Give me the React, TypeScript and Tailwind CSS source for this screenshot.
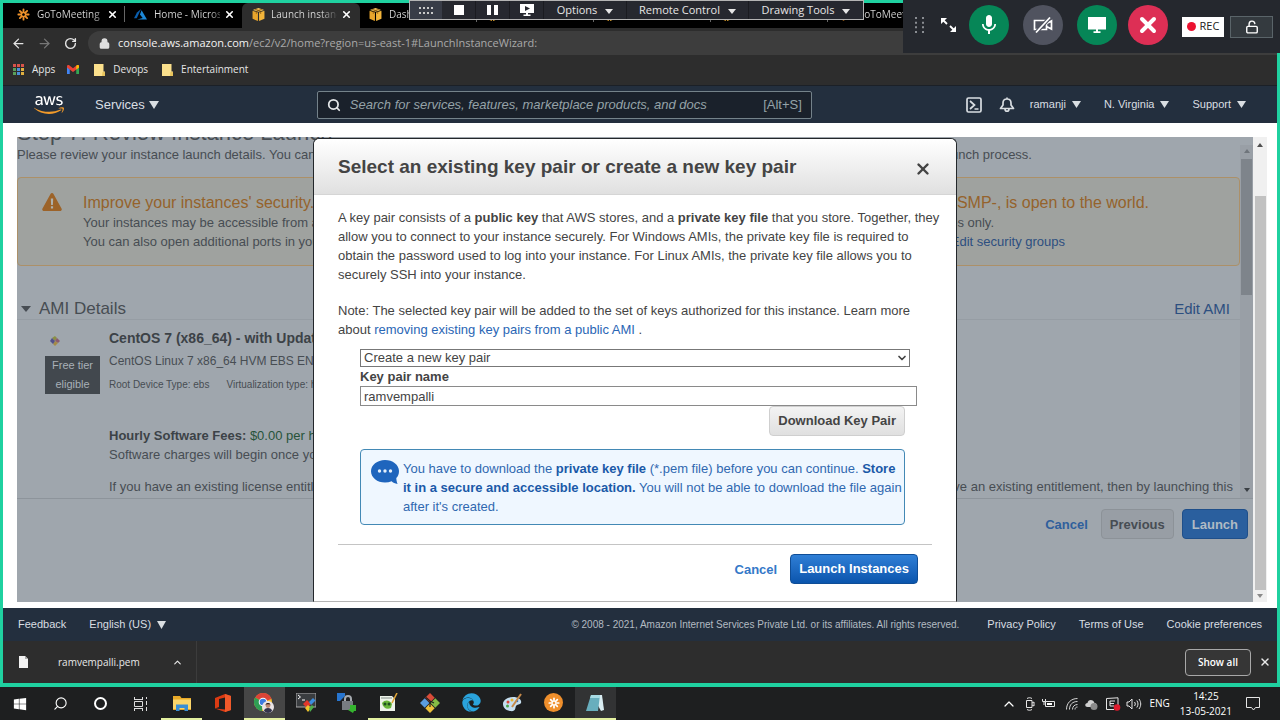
import type { ReactNode } from "react";
import { ArrowLeft, ArrowRight, ChevronDown, ChevronUp, Lock, RotateCw, Search, Unlock, X } from "lucide-react";
import { FaAws, FaEdge, FaWindows } from "react-icons/fa";
import { MdMic } from "react-icons/md";

function Triangle({ className }: { className: string }) {
  return (
    <svg viewBox="0 0 10 8" preserveAspectRatio="none" className={className} fill="currentColor" aria-hidden="true">
      <path d="M0 0h10L5 8z" />
    </svg>
  );
}

function GoToFlower({ className }: { className: string }) {
  return (
    <svg viewBox="0 0 24 24" className={className} stroke="currentColor" strokeWidth="3.4" strokeLinecap="round" aria-hidden="true">
      <path d="M12 8V2.500M12 16v5.500M8 12H2.500M16 12h5.500M9.200 9.200 5.300 5.300M14.800 14.800l3.900 3.900M14.800 9.200l3.900-3.900M9.200 14.800l-3.900 3.900" />
    </svg>
  );
}

function AzureMark() {
  return (
    <svg viewBox="0 0 24 20" className="h-[11px] w-[13px] shrink-0" aria-hidden="true">
      <path d="M13 0 5.500 6.500 0 17h5z" fill="#0a5fae" />
      <path d="m14 2-3 8 5 6.500L6 19h18z" fill="#1c87d6" />
    </svg>
  );
}

function AwsCube() {
  return (
    <svg viewBox="0 0 24 24" className="h-[13px] w-[13px] shrink-0" aria-hidden="true">
      <path d="M1 5 11 8.500V24L1 20z" fill="#e8a52c" />
      <path d="M23 5 13 8.500V24l10-4z" fill="#f3b53a" />
      <path d="M12 0 1.500 3.500 12 7l10.500-3.500z" fill="#f7c65c" />
      <path d="M5.500 2.200 16 5.800v5M18.500 2.200 8 5.800v5" fill="none" stroke="#7a4c0a" strokeWidth="1.300" />
    </svg>
  );
}

function Tab({ icon, title, active = false, divider = false }: { icon: ReactNode; title?: string; active?: boolean; divider?: boolean }) {
  return (
    <div className={active ? "flex h-full w-[118px] shrink-0 items-center rounded-t-md bg-[#2d2d2d] pb-[3px] pl-[10px]" : "relative flex h-full w-[117px] shrink-0 items-center pb-[3px] pl-[9px]"}>
      {divider && <span className="absolute right-0 top-[3px] h-4 w-px bg-[#666]" />}
      {icon}
      {title && (
        <>
          <span className={active ? "ml-[6px] w-[66px] overflow-hidden whitespace-nowrap bg-linear-to-r from-[#dcdcdc] from-75% to-[#444] bg-clip-text text-transparent" : "ml-[7px] w-[66px] overflow-hidden whitespace-nowrap bg-linear-to-r from-[#dcdcdc] from-85% to-[#555] bg-clip-text text-transparent"}>{title}</span>
          <button aria-label={"Close " + title} className="ml-1 text-white">
            <X className="h-[11px] w-[11px]" strokeWidth={3.5} />
          </button>
        </>
      )}
    </div>
  );
}

function TabStrip() {
  return (
    <div className="flex h-[25px] overflow-hidden bg-black pl-[5px] text-[10px]">
      <Tab icon={<GoToFlower className="h-[13px] w-[13px] shrink-0 text-[#f0932b]" />} title="GoToMeeting" divider />
      <Tab icon={<AzureMark />} title="Home - Microsoft" />
      <Tab icon={<AwsCube />} title="Launch instance" active />
      <Tab icon={<AwsCube />} title="Dashboard" divider />
      <Tab icon={<AwsCube />} divider />
      <Tab icon={<AwsCube />} divider />
      <Tab icon={<AwsCube />} divider />
      <Tab icon={<GoToFlower className="h-[13px] w-[13px] shrink-0 text-[#f0932b]" />} title="GoToMeeting" />
    </div>
  );
}

function AddressBar() {
  return (
    <div className="flex h-[30px] items-center bg-[#2d2d2d] pl-2">
      <button aria-label="Back" className="text-[#e4e4e4]"><ArrowLeft className="h-[15px] w-[15px]" /></button>
      <button aria-label="Forward" className="ml-[11px] text-[#777]"><ArrowRight className="h-[15px] w-[15px]" /></button>
      <button aria-label="Reload" className="ml-3 text-[#e4e4e4]"><RotateCw className="h-[13px] w-[13px]" strokeWidth={2.6} /></button>
      <div className="ml-[11px] flex h-6 flex-1 items-center rounded-l-full bg-[#3d3d3d] pl-[11px]">
        <Lock className="h-[11px] w-[11px] text-[#dedede]" fill="currentColor" strokeWidth={3} />
        <span className="ml-2 text-[11px] text-[#a9a9a9]"><span className="text-[#f3f3f3]">console.aws.amazon.com</span>/ec2/v2/home?region=us-east-1#LaunchInstanceWizard:</span>
      </div>
    </div>
  );
}

const appDots = ["#d9534a", "#d9534a", "#d9534a", "#5aa05a", "#4a8fd9", "#e0b040", "#5aa05a", "#4a8fd9", "#e0b040"];

function Folder() {
  return (
    <svg viewBox="0 0 11 12" className="h-3 w-[11px]" aria-hidden="true">
      <path d="M0 0h9.500v7.500H11V12H0z" fill="#fbe08c" />
      <path d="M8.500 8H11v4H8z" fill="#e7c35c" />
    </svg>
  );
}

function Bookmarks() {
  return (
    <nav aria-label="Bookmarks" className="flex h-[27px] items-center bg-[#2d2d2d] pb-1 pl-[10px] text-[10px] text-[#e6e6e6]">
      <a href="#apps" className="flex items-center gap-2">
        <svg viewBox="0 0 11 11" className="h-[11px] w-[11px]" aria-hidden="true">
          {appDots.map((c, i) => (
            <rect key={i} x={(i % 3) * 4} y={Math.floor(i / 3) * 4} width="3" height="3" fill={c} />
          ))}
        </svg>
        Apps
      </a>
      <a href="#mail" aria-label="Gmail" className="ml-3">
        <svg viewBox="0 0 24 18" className="h-[9px] w-3" aria-hidden="true">
          <path d="M0 3v15h5.500V8z" fill="#4285f4" />
          <path d="M24 3v15h-5.500V8z" fill="#34a853" />
          <path d="M0 3c0-3 3-3.500 5-2l7 5.500L19 1c2-1.500 5-1 5 2v2l-12 9L0 5z" fill="#ea4335" />
          <path d="m18.500 1.500 2-1.300C23 0 24 1 24 3v2l-5.500 4z" fill="#fbbc04" />
        </svg>
      </a>
      <a href="#devops" className="ml-[15px] flex items-center gap-2"><Folder />Devops</a>
      <a href="#entertainment" className="ml-[14px] flex items-center gap-2"><Folder />Entertainment</a>
    </nav>
  );
}

function AwsNav() {
  return (
    <header className="flex h-[38px] items-center border-t border-[#1b2027] bg-[#232f3e] pl-[31px] pr-[31px] text-[11px] text-[#d9dee2]">
      <a href="#home" aria-label="AWS" className="relative h-6 w-[30px]">
        <FaAws className="absolute inset-0 h-6 w-[30px] text-white [clip-path:inset(0_0_42%_0)]" />
        <FaAws className="absolute inset-0 h-6 w-[30px] text-[#f19a2a] [clip-path:inset(58%_0_0_0)]" />
      </a>
      <button className="ml-[31px] flex items-center gap-1 text-[13px]">Services<Triangle className="h-2 w-[10px]" /></button>
      <label className="ml-[158px] flex h-7 w-[495px] items-center rounded-xs border border-[#74828a] bg-[#1a212b] px-[9px]">
        <Search className="h-[14px] w-[14px] text-[#e3e6e8]" strokeWidth={3} />
        <input aria-label="Search" placeholder="Search for services, features, marketplace products, and docs" className="ml-[9px] min-w-0 flex-1 bg-transparent text-[13px] italic outline-none placeholder:text-[#95a3a8]" />
        <span className="text-[13px] text-[#95a3a8]">[Alt+S]</span>
      </label>
      <div className="ml-auto flex items-center">
        <button aria-label="CloudShell">
          <svg viewBox="0 0 16 16" className="h-4 w-4" fill="none" stroke="currentColor" strokeWidth="1.700" aria-hidden="true"><rect x="1" y="1" width="14" height="14" rx="1.500" /><path d="m4 4 4.500 4L4 12M8.500 12H12.500" /></svg>
        </button>
        <button aria-label="Notifications" className="ml-[17px]">
          <svg viewBox="0 0 16 16" className="h-4 w-4" fill="none" stroke="currentColor" strokeWidth="1.700" strokeLinejoin="round" aria-hidden="true"><path d="M1.500 11.500 4 8V6c0-2.200 1.500-4 4-4s4 1.800 4 4v2l2.500 3.500zM8 .5V2M6 12c0 3 4 3 4 0" /></svg>
        </button>
        <button className="ml-[15px] flex items-center gap-[6px]">ramanji<Triangle className="h-[7px] w-[9px]" /></button>
        <button className="ml-[23px] flex items-center gap-[6px]">N. Virginia<Triangle className="h-[7px] w-[9px]" /></button>
        <button className="ml-[23px] flex items-center gap-[6px]">Support<Triangle className="h-[7px] w-[9px]" /></button>
      </div>
    </header>
  );
}

function ReviewPage() {
  return (
    <main className="flex h-full flex-1 flex-col overflow-hidden bg-[#9fa6ad] text-[13px] leading-[19px] text-[#474d53]">
      <div className="flex h-2 items-end overflow-hidden pb-[2px]">
        <h1 className="whitespace-nowrap text-[22px] leading-[20px]">Step 7: Review Instance Launch</h1>
      </div>
      <div className="flex h-[354px] border-b border-[#8d949b]">
        <div className="min-w-0 flex-1">
          <p className="flex w-[1015px] justify-between whitespace-nowrap"><span>Please review your instance launch details. You can go back</span><span>complete the launch process.</span></p>
          <section className="mt-[13px] flex h-[89px] rounded-sm border border-[#ac9068] bg-[#9fa29f] pl-6 pt-[15px]">
            <svg viewBox="0 0 20 18" className="h-[18px] w-5" aria-hidden="true">
              <path d="M10 0c.7 0 1.200.3 1.500.9l8 14.600c.7 1.200 0 2.500-1.500 2.500H2C.5 18-.2 16.700.5 15.500l8-14.600C8.800.3 9.300 0 10 0z" fill="#9c6329" />
              <path d="M8.800 5.500h2.400L10.900 12H9.100zM8.900 13.200h2.200v2.200H8.900z" fill="#aeb1ae" />
            </svg>
            <div className="ml-[21px] w-[1066px] whitespace-nowrap">
              <h2 className="flex justify-between text-[16px] leading-[20px] text-[#95632c]"><span>Improve your instances' security. Your group,</span><span>SMP-, is open to the world.</span></h2>
              <p className="flex w-[911px] justify-between"><span>Your instances may be accessible from any IP</span><span>addresses only.</span></p>
              <p className="flex w-[982px] justify-between"><span>You can also open additional ports in your security</span><a href="#groups" className="text-[#2d4f80]">Edit security groups</a></p>
            </div>
          </section>
          <div className="mt-8 flex h-[22px] items-center border-b border-[#969da4] pl-1 pr-[10px]">
            <Triangle className="h-[6px] w-[10px]" />
            <h2 className="ml-2 text-[17px]">AMI Details</h2>
            <a href="#ami" className="ml-auto text-[15px] text-[#2d4f80]">Edit AMI</a>
          </div>
          <div className="flex pl-7">
            <div className="w-[55px] shrink-0 pt-4">
              <svg viewBox="0 0 10 10" className="ml-[5px] h-[10px] w-[10px]" aria-hidden="true">
                <path d="m5 0 2 2-2 3-3-3z" fill="#8b8f45" />
                <path d="m10 5-2 2-3-2 2-3z" fill="#8a5a6e" />
                <path d="m5 10-2-2 2-3 3 2z" fill="#a58a45" />
                <path d="m0 5 2-3 3 3-2 3z" fill="#51508a" />
              </svg>
              <p className="mt-[10px] bg-[#42484e] text-center text-[11px] text-[#a9b0b7]">Free tier<br />eligible</p>
            </div>
            <div className="ml-[9px] min-w-0 flex-1 whitespace-nowrap pt-[9px]">
              <h3 className="text-[14px] font-bold text-[#3c4247]">CentOS 7 (x86_64) - with Updates</h3>
              <p className="mt-1 text-[12px]">CentOS Linux 7 x86_64 HVM EBS ENA 2002_01</p>
              <p className="mt-1 flex gap-[17px] text-[10px]"><span>Root Device Type: ebs</span><span>Virtualization type: hvm</span></p>
              <p className="mt-8"><b className="text-[#3c4247]">Hourly Software Fees:</b> <span className="text-[#27533a]">$0.00 per hour</span></p>
              <p>Software charges will begin once you launch</p>
              <p className="mt-[13px] flex justify-between pr-[7px]"><span>If you have an existing license entitlement</span><span>have an existing entitlement, then by launching this</span></p>
            </div>
          </div>
        </div>
        <div className="flex w-[13px] flex-col items-center bg-[#999fa6]">
          <Triangle className="mt-1 h-1 w-[6px] rotate-180 text-[#6f757b]" />
          <div className="mt-[6px] h-[136px] w-[11px] bg-[#7e848b]" />
          <Triangle className="mb-[6px] mt-auto h-1 w-[6px] text-[#3a3f44]" />
        </div>
      </div>
      <div className="flex items-center justify-end pr-[5px] pt-[10px] font-bold">
        <button className="text-[#2f5f9c]">Cancel</button>
        <button className="ml-[13px] h-[30px] rounded-sm border border-[#8c9298] bg-[#989ea5] px-2">Previous</button>
        <button className="ml-2 h-[30px] rounded-sm border border-[#1f4f8a] bg-[#2a5f9e] px-[9px] text-[#b0bac4]">Launch</button>
      </div>
    </main>
  );
}

function KeyPairDialog() {
  return (
    <div role="dialog" aria-labelledby="dialog-title" className="absolute left-1/2 top-px w-[644px] -translate-x-1/2 rounded-t-md border border-[#23272b] border-b-[#b5b5b5] bg-white text-[13px] leading-[19px] text-[#444]">
      <div className="flex h-14 items-center justify-between rounded-t-md border-b border-[#d5d5d5] bg-linear-to-b from-white to-[#e0e0e0] pl-6 pr-6">
        <h2 id="dialog-title" className="text-[19px] font-bold">Select an existing key pair or create a new key pair</h2>
        <button aria-label="Close dialog"><X className="mt-1 h-[18px] w-[18px]" strokeWidth={3.2} /></button>
      </div>
      <div className="px-6 pt-[13px]">
        <p className="whitespace-nowrap">
          A key pair consists of a <b>public key</b> that AWS stores, and a <b>private key file</b> that you store. Together, they<br />
          allow you to connect to your instance securely. For Windows AMIs, the private key file is required to<br />
          obtain the password used to log into your instance. For Linux AMIs, the private key file allows you to<br />
          securely SSH into your instance.
        </p>
        <p className="mt-[17px] whitespace-nowrap">
          Note: The selected key pair will be added to the set of keys authorized for this instance. Learn more<br />
          about <a href="#remove" className="text-[#2a66b5]">removing existing key pairs from a public AMI</a> .
        </p>
        <div className="pl-[22px] pr-[15px]">
          <div className="relative mr-[7px] mt-[10px]">
            <select aria-label="Key pair option" className="block h-[18px] w-full appearance-none border border-[#777] bg-white pl-[3px] leading-4">
              <option>Create a new key pair</option>
            </select>
            <ChevronDown className="pointer-events-none absolute right-[2px] top-[3px] h-3 w-3" strokeWidth={3.4} />
          </div>
          <label htmlFor="pair-name" className="block font-bold">Key pair name</label>
          <input id="pair-name" defaultValue="ramvempalli" className="block h-5 w-full border border-[#8a8a8a] bg-white px-[3px]" />
          <div className="mr-3">
            <div className="flex justify-end">
              <button className="h-[30px] rounded-sm border border-[#cfcfcf] bg-linear-to-b from-[#f3f3f3] to-[#e0e0e0] px-2 pb-[1px] font-bold">Download Key Pair</button>
            </div>
            <div className="mt-[13px] flex h-[76px] rounded-sm border border-[#4389b5] bg-[#eff7ff] pl-[10px] pt-[9px] text-[#3068b0]">
              <svg viewBox="0 0 28 26" className="h-[26px] w-7 shrink-0" aria-hidden="true">
                <path d="M14 1c7.700 0 14 4.800 14 11 0 3.300-1 5.200-2.700 7.100.1 2.300.6 4.400 1.300 5.900-2.600-.4-4.700-1.300-6-2.700-2 .8-4.200 1.200-6.600 1.200C6.300 23.500 0 18.500 0 12.200 0 6 6.300 1 14 1z" fill="#1f65bd" />
                <g fill="#e6f0fb"><circle cx="8.500" cy="12" r="1.700" /><circle cx="14" cy="12" r="1.700" /><circle cx="19.500" cy="12" r="1.700" /></g>
              </svg>
              <p className="ml-1 whitespace-nowrap">
                You have to download the <b className="text-[#1a59a8]">private key file</b> (*.pem file) before you can continue. <b className="text-[#1a59a8]">Store<br />
                it in a secure and accessible location.</b> You will not be able to download the file again<br />
                after it's created.
              </p>
            </div>
          </div>
        </div>
        <div className="mt-[19px] flex items-center justify-end border-t border-[#c4c4c4] pb-[17px] pr-[14px] pt-[9px] font-bold">
          <button className="text-[#3478c8]">Cancel</button>
          <button className="ml-[13px] h-[30px] rounded-sm border border-[#0f4d96] bg-linear-to-b from-[#2f7fd6] to-[#0a55ad] px-2 pb-[1px] text-white">Launch Instances</button>
        </div>
      </div>
    </div>
  );
}

function AwsFooter() {
  return (
    <footer className="flex h-[33px] items-center bg-[#232f3e] pl-[15px] pr-[15px] text-[11px] text-[#d9dee2]">
      <a href="#feedback">Feedback</a>
      <button className="ml-[23px] flex items-center gap-[6px]">English (US)<Triangle className="h-2 w-[9px]" /></button>
      <span className="ml-auto text-[10px] text-[#b3bbc2]">© 2008 - 2021, Amazon Internet Services Private Ltd. or its affiliates. All rights reserved.</span>
      <a href="#privacy" className="ml-7">Privacy Policy</a>
      <a href="#terms" className="ml-[23px]">Terms of Use</a>
      <a href="#cookies" className="ml-[23px]">Cookie preferences</a>
    </footer>
  );
}

function DownloadShelf() {
  return (
    <div className="flex h-[42px] items-center bg-[#2d2d2d] pl-4 pr-[6px] text-[10px] text-[#e8e8e8]">
      <svg viewBox="0 0 9 12" className="h-3 w-[9px]" aria-hidden="true"><path d="M0 0h6l3 3v9H0z" fill="#f2f2f2" /><path d="M6 0v3h3" fill="#aaa" /></svg>
      <a href="#file" className="ml-[30px]">ramvempalli.pem</a>
      <button aria-label="File options" className="ml-8"><ChevronUp className="h-[11px] w-[11px]" strokeWidth={2.5} /></button>
      <span className="ml-[13px] h-full w-px bg-[#3c3c3c]" />
      <button className="ml-auto h-[27px] rounded border border-[#a8a8a8] bg-[#363636] px-3 font-semibold text-white">Show all</button>
      <button aria-label="Close downloads" className="ml-2"><X className="h-3 w-3" strokeWidth={2.8} /></button>
    </div>
  );
}

function MeetingBar() {
  return (
    <div className="absolute left-[409px] top-0 flex h-5 w-[455px] items-stretch border border-[#b4b4b4] bg-[#26282f] text-[11px] text-[#e6e6e6]">
      <div className="flex w-8 items-center justify-center bg-[#383c47]">
        <svg viewBox="0 0 14 7" className="h-[7px] w-[14px]" fill="#c9c9c9" aria-hidden="true">
          <path d="M0 0h2v2H0zM4 0h2v2H4zM8 0h2v2H8zM12 0h2v2h-2zM0 5h2v2H0zM4 5h2v2H4zM8 5h2v2H8zM12 5h2v2h-2z" />
        </svg>
      </div>
      <button aria-label="Stop" className="flex w-[34px] items-center justify-center border-r border-[#1a1b20]"><span className="h-[10px] w-[10px] bg-white" /></button>
      <button aria-label="Pause" className="flex w-[34px] items-center justify-center gap-[3px] border-r border-[#1a1b20]"><span className="h-[10px] w-1 bg-white" /><span className="h-[10px] w-1 bg-white" /></button>
      <button aria-label="Show screen" className="flex w-[34px] items-center justify-center border-r border-[#1a1b20]">
        <svg viewBox="0 0 14 12" className="h-3 w-[14px]" aria-hidden="true"><path d="M0 0h14v9H0zM6 9h2v1.500H6zM3.500 10.500h7V12h-7z" fill="#fff" /><path d="M5 2v5l5-2.500z" fill="#26282f" /></svg>
      </button>
      <button className="flex w-[83px] items-center justify-center gap-2 border-r border-[#1a1b20]">Options<Triangle className="mt-[2px] h-[5px] w-2" /></button>
      <button className="flex w-[122px] items-center justify-center gap-2 border-r border-[#1a1b20]">Remote Control<Triangle className="mt-[2px] h-[5px] w-2" /></button>
      <button className="flex flex-1 items-center justify-center gap-2">Drawing Tools<Triangle className="mt-[2px] h-[5px] w-2" /></button>
    </div>
  );
}

function CallPanel() {
  return (
    <div className="absolute right-0 top-0 flex h-[53px] w-[377px] items-center bg-[#25282e] pb-[3px] pl-3 text-white">
      <svg viewBox="0 0 9 16" className="h-4 w-[9px]" fill="#8a8d92" aria-hidden="true">
        <path d="M0 0h2v2H0zM7 0h2v2H7zM0 4.700h2v2H0zM7 4.700h2v2H7zM0 9.300h2v2H0zM7 9.300h2v2H7zM0 14h2v2H0zM7 14h2v2H7z" />
      </svg>
      <button aria-label="Resize" className="ml-4">
        <svg viewBox="0 0 17 16" className="h-4 w-[17px]" aria-hidden="true"><path d="M1 1h6L1 7zM16 15h-6l6-6z" fill="#fff" /><path d="m3 3 4 4M10 9l4 4" stroke="#fff" strokeWidth="1.800" /></svg>
      </button>
      <button aria-label="Mute" className="ml-3 flex h-10 w-10 items-center justify-center rounded-full bg-[#068657]"><MdMic className="h-6 w-6" /></button>
      <button aria-label="Camera" className="ml-[14px] flex h-10 w-10 items-center justify-center rounded-full bg-[#50535f]">
        <svg viewBox="0 0 20 16" className="h-4 w-5" fill="none" stroke="#fff" strokeWidth="1.700" aria-hidden="true"><path d="M1.500 3.500h12v9h-12zM13.500 6.500l5-2.500v8l-5-2.500" /><path d="M17 .5 3 15.500" stroke="#50535f" strokeWidth="4" /><path d="M17 .5 3 15.500" /></svg>
      </button>
      <button aria-label="Share screen" className="ml-[14px] flex h-10 w-10 items-center justify-center rounded-full bg-[#068657]">
        <svg viewBox="0 0 18 16" className="h-4 w-[18px]" fill="#fff" aria-hidden="true"><path d="M0 0h18v12.500H0zM8 12h2v2.500H8zM5.500 14.300h7V16h-7z" /></svg>
      </button>
      <button aria-label="Leave" className="ml-[11px] flex h-10 w-10 items-center justify-center rounded-full bg-[#dd2f55]"><X className="h-6 w-6" strokeWidth={4} /></button>
      <button className="ml-[14px] mt-[3px] flex h-5 w-[42px] items-center justify-center gap-1 bg-white text-[11px] text-[#222]"><span className="h-[9px] w-[9px] rounded-full bg-[#ec1230]" />REC</button>
      <button aria-label="Unlock meeting" className="ml-[6px] mt-[3px] flex h-[22px] w-[43px] items-center justify-center border border-[#5a6469] bg-[#343a3f]"><Unlock className="h-[14px] w-[14px]" strokeWidth={2.4} /></button>
    </div>
  );
}

const TILE = "flex h-full flex-1 items-center justify-center border-b-2 border-transparent";
const TILE_OPEN = "flex h-full flex-1 items-center justify-center border-b-2 border-[#e3f0a0]";
const TILE_ACTIVE = "flex h-full flex-1 items-center justify-center border-b-2 border-[#e3f0a0] bg-[#464646]";

function Taskbar() {
  return (
    <div className="flex h-[33px] items-center bg-[#1e1f20] text-[10px] text-white">
      <button aria-label="Start" className="flex w-10 justify-center"><FaWindows className="h-[14px] w-[14px]" /></button>
      <button aria-label="Search" className="flex w-10 justify-center"><Search className="h-[15px] w-[15px] -scale-x-100" strokeWidth={1.8} /></button>
      <button aria-label="Cortana" className="flex w-10 justify-center"><span className="h-[13px] w-[13px] rounded-full border-2 border-white" /></button>
      <button aria-label="Task view" className="flex w-[41px] justify-center">
        <svg viewBox="0 0 15 14" className="h-[14px] w-[15px]" fill="none" stroke="#ddd" aria-hidden="true"><path d="M1.500 0v3M9.500 0v3M1.500 2.500h8M1.500 14v-3M9.500 14v-3M1.500 11.500h8M1.500 4.500h8v5h-8zM13.500 0v2M13.500 4v4M13.500 10v4" /></svg>
      </button>
      <div className="flex h-full w-[455px]">
        <button aria-label="File Explorer" className={TILE_OPEN}>
          <svg viewBox="0 0 18 16" className="h-4 w-[18px]" aria-hidden="true"><path d="M0 1h7l1.500 2H18v12H0z" fill="#e9a927" /><path d="M0 4.500h18V14H0z" fill="#fbd66b" /><path d="M3 16V9.500h12V16h-3.500v-3h-5v3z" fill="#3a8fd6" /></svg>
        </button>
        <button aria-label="Office" className={TILE}>
          <svg viewBox="0 0 16 18" className="h-[18px] w-4" aria-hidden="true"><path d="M0 4 10 0l6 2v14l-6 2-10-3.500 10 1V3.500L4 5v8l-4 1.500z" fill="#dc3b13" /><path d="m10 0 6 2v14l-6 2z" fill="#f0592a" /></svg>
        </button>
        <button aria-label="Chrome" className={TILE_ACTIVE}>
          <svg viewBox="0 0 22 20" className="h-5 w-[22px]" aria-hidden="true">
            <circle cx="10" cy="9" r="9" fill="#f4c430" />
            <path d="M10 9 2.200 4.500A9 9 0 0 1 18.500 6z" fill="#dc4437" />
            <path d="M10 9 2.200 4.500A9 9 0 0 0 9 18z" fill="#2f9e54" />
            <circle cx="10" cy="9" r="4.300" fill="#fff" /><circle cx="10" cy="9" r="3.300" fill="#3d7ce0" />
            <circle cx="15" cy="14" r="6" fill="#e9e4e6" /><circle cx="15" cy="12.500" r="2.400" fill="#c08a70" /><path d="M12.300 12a2.800 2.800 0 0 1 5.400 0l-1-.8h-3z" fill="#1c1517" /><path d="M11 18c0-4 8-4 8 0-2 2.500-6 2.500-8 0z" fill="#33344a" />
          </svg>
        </button>
        <button aria-label="MobaXterm" className={TILE}>
          <svg viewBox="0 0 20 20" className="h-5 w-5" aria-hidden="true"><path d="M0 0h20v14H0z" fill="#3a3d40" stroke="#aaa" /><path d="m2 2 2.500 2L2 6M6 7h3" stroke="#fff" fill="none" /><path d="m7 11 4-4 4 4-4 4z" fill="#e0362c" /><path d="m13 9 4-4 2.500 2.500L15 12z" fill="#3c8ddf" /><path d="m9 15 3-3 3 3-3 4z" fill="#f0c22c" /><path d="m13 15 3-3 2 2-4 5z" fill="#4eb04b" /></svg>
        </button>
        <button aria-label="WinSCP" className={TILE}>
          <svg viewBox="0 0 20 20" className="h-5 w-5" aria-hidden="true"><path d="M0 0h8v3L3 8H0z" fill="#2775cf" /><path d="M8 8V6c0-4 6-4 6 0v2" stroke="#a5aaaf" strokeWidth="2" fill="none" /><path d="M5 8h11v9H5z" fill="#777c81" /><path d="M13 12h6v6h-2l-1 2-5-3 2-1z" fill="#35b52f" /></svg>
        </button>
        <button aria-label="Notepad++" className={TILE_OPEN}>
          <svg viewBox="0 0 19 19" className="h-[19px] w-[19px]" aria-hidden="true"><path d="M1 3h12l3 3v12H1z" fill="#eef3ea" /><path d="M2 4h11v2H2z" fill="#b8bfb8" /><path d="M3 10c3-4 8-3 10 1l-1 4c-4 2-8 0-9-5z" fill="#68b53a" /><circle cx="6" cy="11" r="1.500" fill="#205020" /><circle cx="10" cy="11" r="1.500" fill="#205020" /><path d="m18 0-5 10" stroke="#e0a436" strokeWidth="1.600" /></svg>
        </button>
        <button aria-label="Git" className={TILE_OPEN}>
          <svg viewBox="0 0 20 20" className="h-5 w-5" aria-hidden="true"><path d="m10 0 4.700 4.700L10 9.400 5.300 4.700z" fill="#d94c38" /><path d="m4.700 5.300 4.700 4.700-4.700 4.700L0 10z" fill="#5b9de0" /><path d="M15.300 5.300 20 10l-4.700 4.700L10.600 10z" fill="#86bd45" /><path d="m10 10.600 4.700 4.700L10 20l-4.700-4.700z" fill="#eec13c" /><path d="M6 4.500 10 8v6M10 8l4 2" stroke="#222" strokeWidth="1.200" fill="none" /></svg>
        </button>
        <button aria-label="Edge" className={TILE_OPEN}><FaEdge className="h-[19px] w-[19px] text-[#2aa3dc]" /></button>
        <button aria-label="Paint" className={TILE_OPEN}>
          <svg viewBox="0 0 20 20" className="h-5 w-5" aria-hidden="true"><path d="M10 4c6 0 9 3 8 6-1 2-4 1-5 3s0 6-6 5c-5-1-7-4-7-7 0-4 5-7 10-7z" fill="#c6dff0" /><circle cx="5" cy="9" r="1.500" fill="#d8453a" /><circle cx="9" cy="7" r="1.500" fill="#e7b32c" /><circle cx="4.500" cy="13" r="1.500" fill="#4aa84a" /><circle cx="14" cy="8" r="1.300" fill="#326fc0" /><path d="M18 1 9 14" stroke="#c68a4a" strokeWidth="2" /></svg>
        </button>
        <button aria-label="GoToMeeting" className={TILE_OPEN}><span className="flex h-[19px] w-[19px] items-center justify-center rounded-full bg-[#ef8f2c]"><GoToFlower className="h-3 w-3" /></span></button>
        <button aria-label="Notepad" className="flex h-full flex-1 items-center justify-center border-b-2 border-[#e3f0a0] bg-[#323334]">
          <svg viewBox="0 0 18 18" className="h-[18px] w-[18px]" aria-hidden="true"><path d="M6 1h10l2 15-3 1z" fill="#d9edf2" /><path d="M5 1h9l-2 16H0z" fill="#68aebd" /><path d="M5 1h9v3H4z" fill="#a7dbe4" /></svg>
        </button>
      </div>
      <div className="ml-auto flex items-center gap-[5px] pr-5">
        <ChevronUp className="h-4 w-4" strokeWidth={1.8} />
        <svg viewBox="0 0 14 14" className="ml-[1px] h-[14px] w-[14px]" fill="none" stroke="#e5e5e5" aria-hidden="true"><path d="M3.500 3.500h5.500v7H3.500zM9 6l2-1v4L9 8M4 1.500c1.500-1 3.500-1 5 0M4 12.500c1.500 1 3.500 1 5 0" /></svg>
        <svg viewBox="0 0 14 14" className="h-[14px] w-[14px]" aria-hidden="true"><path d="M3.500 4.500h9v5h-9z" stroke="#e5e5e5" fill="none" /><path d="M5 6h5v2H5z" fill="#fff" /><path d="M.5 2v2.500h3V2M2 4.500V8" stroke="#e5e5e5" fill="none" /></svg>
        <svg viewBox="0 0 14 14" className="ml-1 h-[14px] w-[14px]" fill="none" stroke="#d5d5d5" aria-hidden="true"><path d="M1.500 12.500C1.500 6 6 1.500 12.500 1.500M4.500 12.500c0-5 3-8 8-8M7.500 12.500c0-3 2-5 5-5M10 12.500c0-1.500 1-2.500 2.500-2.500" /></svg>
        <svg viewBox="0 0 14 14" className="h-[14px] w-[14px]" aria-hidden="true"><path d="M3.500 10C.5 10 .5 6 3.500 6c.5-4 6-4 7 0 3 0 3 4 .5 4z" fill="#cfcfcf" /><circle cx="10" cy="9.500" r="3.500" fill="#8a8a8a" /></svg>
        <svg viewBox="0 0 16 14" className="ml-[2px] h-[14px] w-4" aria-hidden="true"><path d="M1.500 1.500 13 .8v8M1.500 1.500v11H9" fill="none" stroke="#e5e5e5" /><path d="M10 4H5v5h4M5 6.500h4" fill="none" stroke="#e5e5e5" /><circle cx="12" cy="10.500" r="3.300" fill="#e01b2d" /></svg>
        <svg viewBox="0 0 16 14" className="h-[14px] w-4" fill="none" stroke="#e5e5e5" aria-hidden="true"><path d="M1 5h2l3-3v10L3 9H1zM8.500 5c1 1.300 1 2.700 0 4M10.800 3.500c1.600 2.200 1.600 4.800 0 7M13 2c2.300 3.300 2.300 6.700 0 10" /></svg>
        <span className="ml-[2px]">ENG</span>
        <p className="ml-[5px] text-center leading-[15px]">14:25<br />13-05-2021</p>
        <svg viewBox="0 0 14 14" className="ml-[9px] h-[14px] w-[14px]" fill="none" stroke="#e5e5e5" aria-hidden="true"><path d="M.5.5h13v10H9.500L7.500 13l-2-2.500h-5z" /></svg>
      </div>
    </div>
  );
}

export default function App() {
  return (
    <div className="relative flex min-h-screen flex-col overflow-hidden bg-[#1e1f20] font-['Open_Sans','Noto_Sans',sans-serif] text-[11px]">
      <div className="flex flex-1 flex-col border-[3px] border-b-4 border-[#1fd1a0]">
        <TabStrip />
        <AddressBar />
        <Bookmarks />
        <div className="flex flex-1 flex-col font-['Liberation_Sans',Arial,sans-serif]">
          <AwsNav />
          <div className="flex flex-auto bg-white pb-[6px] pl-[14px] pr-[10px] pt-[14px]">
            <div className="relative flex min-w-0 flex-1 overflow-hidden">
              <ReviewPage />
              <KeyPairDialog />
            </div>
            <div className="flex w-[14px] flex-col items-center bg-[#f0f0f0] pb-1 pt-[6px]">
              <Triangle className="h-1 w-[6px] rotate-180 text-[#505050]" />
              <div className="mb-1 mt-[49px] w-[11px] flex-1 bg-[#c1c1c1]" />
              <Triangle className="h-1 w-[6px] text-[#8a8a8a]" />
            </div>
          </div>
          <AwsFooter />
        </div>
        <DownloadShelf />
      </div>
      <Taskbar />
      <MeetingBar />
      <CallPanel />
    </div>
  );
}
